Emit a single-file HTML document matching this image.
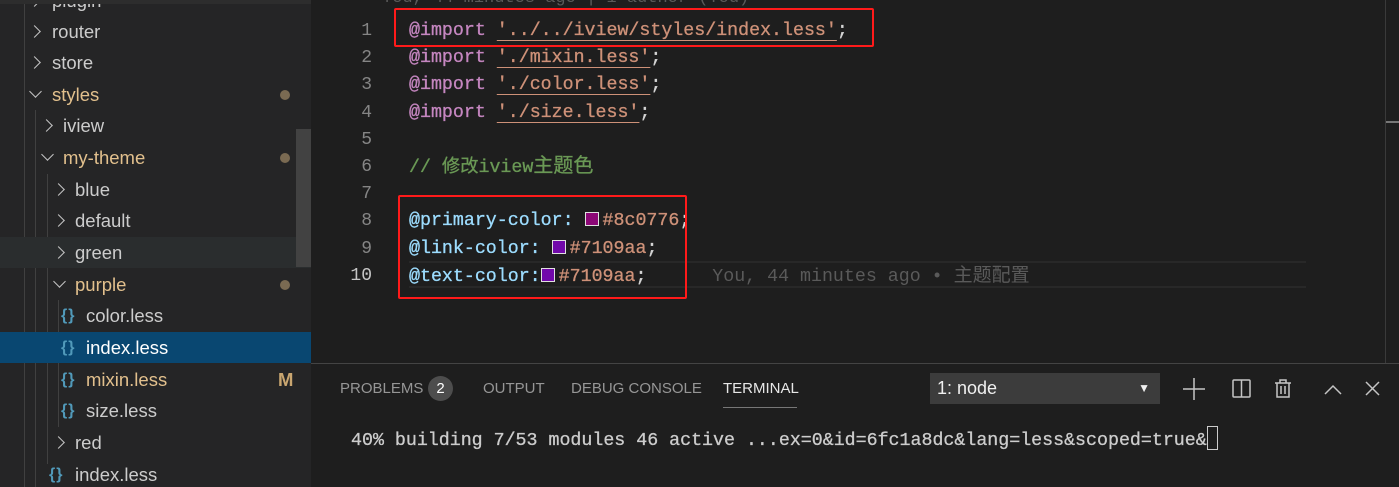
<!DOCTYPE html>
<html><head><meta charset="utf-8">
<style>
*{margin:0;padding:0;box-sizing:border-box}
body{width:1399px;height:487px;overflow:hidden;background:#1e1e1e;position:relative;font-family:"Liberation Sans","Noto Sans CJK SC",sans-serif}
#side{position:absolute;left:0;top:0;width:311px;height:487px;background:#252526;overflow:hidden}
.row{position:absolute;left:0;width:311px;height:31px;font-size:18.5px;color:#cccccc;line-height:31px;white-space:nowrap}
.row .t{position:absolute}
.chev{position:absolute;top:11px;width:9px;height:9px;border-right:1.5px solid #c5c5c5;border-bottom:1.5px solid #c5c5c5;transform:rotate(-45deg)}
.chev.o{transform:rotate(45deg);top:8px}
.dot{position:absolute;left:280px;top:11px;width:10px;height:10px;border-radius:50%;background:#7a6a52}
.br{position:absolute;color:#519aba;font-size:16px;font-weight:bold;letter-spacing:1px}
.mono{font-family:"Liberation Mono","Noto Sans CJK SC",monospace}
.guide{position:absolute;width:1px;background:#404040}
.ln{position:absolute;width:60px;left:312px;text-align:right;color:#858585;font-size:18px;line-height:27px}
.code{position:absolute;left:409px;font-size:18.3px;line-height:27px;white-space:pre;color:#d4d4d4;-webkit-text-stroke:0.3px}
.kw{color:#c586c0}.str{color:#ce9178;text-decoration:underline;text-decoration-color:#ce9178;text-underline-offset:5px}
.var{color:#9cdcfe}.cm{color:#6a9955}
.sw{display:inline-block;width:14px;height:14px;border:1.5px solid #e0e0e0;vertical-align:-1px;margin-right:4px;-webkit-text-stroke:0}
.red{position:absolute;border:2.5px solid #ff1a1a;border-radius:2px}
.tab{position:absolute;top:380px;font-size:15px;color:#969696}
</style></head><body>
<div id="side">
  <div class="guide" style="left:24px;top:0;height:487px"></div>
  <div class="guide" style="left:35px;top:110px;height:377px"></div>
  <div class="guide" style="left:47px;top:174px;height:290px"></div>
  <div class="row" style="top:-15px"><span class="chev" style="left:30px"></span><span class="t" style="left:52px">plugin</span></div>
  <div class="row" style="top:16px"><span class="chev" style="left:30px"></span><span class="t" style="left:52px">router</span></div>
  <div class="row" style="top:47px"><span class="chev" style="left:30px"></span><span class="t" style="left:52px">store</span></div>
  <div class="row" style="top:79px;color:#e2c08d"><span class="chev o" style="left:31px"></span><span class="t" style="left:52px">styles</span><span class="dot"></span></div>
  <div class="row" style="top:110px"><span class="chev" style="left:42px"></span><span class="t" style="left:63px">iview</span></div>
  <div class="row" style="top:142px;color:#e2c08d"><span class="chev o" style="left:43px"></span><span class="t" style="left:63px">my-theme</span><span class="dot"></span></div>
  <div class="row" style="top:174px"><span class="chev" style="left:54px"></span><span class="t" style="left:75px">blue</span></div>
  <div class="row" style="top:205px"><span class="chev" style="left:54px"></span><span class="t" style="left:75px">default</span></div>
  <div class="row" style="top:237px;background:#2a2d2e"><span class="chev" style="left:54px"></span><span class="t" style="left:75px">green</span></div>
  <div class="row" style="top:269px;color:#e2c08d"><span class="chev o" style="left:55px"></span><span class="t" style="left:75px">purple</span><span class="dot"></span></div>
  <div class="guide" style="left:58px;top:300px;height:127px"></div>
  <div class="row" style="top:300px"><span class="br" style="left:61px">{}</span><span class="t" style="left:86px">color.less</span></div>
  <div class="row" style="top:332px;background:#094771;color:#fff"><span class="br" style="left:61px">{}</span><span class="t" style="left:86px">index.less</span></div>
  <div class="row" style="top:364px;color:#e2c08d"><span class="br" style="left:61px">{}</span><span class="t" style="left:86px">mixin.less</span><span class="t" style="left:278px;font-weight:bold;color:#c9a670">M</span></div>
  <div class="row" style="top:395px"><span class="br" style="left:61px">{}</span><span class="t" style="left:86px">size.less</span></div>
  <div class="row" style="top:427px"><span class="chev" style="left:54px"></span><span class="t" style="left:75px">red</span></div>
  <div class="row" style="top:459px"><span class="br" style="left:49px">{}</span><span class="t" style="left:75px">index.less</span></div>
  <div style="position:absolute;left:296px;top:129px;width:15px;height:138px;background:#424242"></div>
  <div style="position:absolute;left:0;top:0;width:311px;height:4px;background:#2d2d2d"></div>
</div>

<div class="mono" style="position:absolute;left:382px;top:-11px;font-size:17px;color:#5a5a5a">You, 44 minutes ago | 1 author (You)</div>
<div class="mono">
<div class="ln" style="top:18px">1</div><div class="ln" style="top:45px">2</div><div class="ln" style="top:72px">3</div><div class="ln" style="top:100px">4</div><div class="ln" style="top:127px">5</div><div class="ln" style="top:154px">6</div><div class="ln" style="top:181px">7</div><div class="ln" style="top:208px">8</div><div class="ln" style="top:236px">9</div><div class="ln" style="top:263px;color:#c6c6c6">10</div>
</div>
<div style="position:absolute;left:409px;top:261px;width:897px;height:27px;border-top:2px solid #282828;border-bottom:2px solid #282828"></div>
<div class="code mono" style="top:18px"><span class="kw">@import</span> <span class="str">'../../iview/styles/index.less'</span>;</div>
<div class="code mono" style="top:45px"><span class="kw">@import</span> <span class="str">'./mixin.less'</span>;</div>
<div class="code mono" style="top:72px"><span class="kw">@import</span> <span class="str">'./color.less'</span>;</div>
<div class="code mono" style="top:100px"><span class="kw">@import</span> <span class="str">'./size.less'</span>;</div>
<div class="code mono" style="top:154px"><span class="cm">// 修改iview<span style="font-size:20px">主题色</span></span></div>
<div class="code mono" style="top:208px"><span class="var">@primary-color:</span> <span class="sw" style="background:#8c0776"></span><span style="color:#ce9178">#8c0776</span>;</div>
<div class="code mono" style="top:236px"><span class="var">@link-color:</span> <span class="sw" style="background:#7109aa"></span><span style="color:#ce9178">#7109aa</span>;</div>
<div class="code mono" style="top:263px"><span class="var">@text-color:</span><span class="sw" style="background:#7109aa"></span><span style="color:#ce9178">#7109aa</span>;      <span style="color:#5a5a5a;-webkit-text-stroke:0">You, 44 minutes ago • <span style="font-size:19px">主题配置</span></span></div>
<div class="red" style="left:394px;top:8px;width:480px;height:39px"></div>
<div class="red" style="left:398px;top:195px;width:289px;height:104px"></div>
<div style="position:absolute;left:1385px;top:0;width:1px;height:363px;background:#3a3a3a"></div>
<div style="position:absolute;left:1386px;top:121px;width:13px;height:2px;background:#777"></div>

<div style="position:absolute;left:311px;top:363px;width:1088px;height:124px;background:#1e1e1e;border-top:1px solid #444"></div>
<div class="tab" style="left:340px">PROBLEMS</div>
<div style="position:absolute;left:428px;top:376px;width:25px;height:25px;border-radius:50%;background:#4d4d4d;color:#fff;font-size:15px;text-align:center;line-height:25px">2</div>
<div class="tab" style="left:483px">OUTPUT</div>
<div class="tab" style="left:571px">DEBUG CONSOLE</div>
<div class="tab" style="left:723px;color:#e7e7e7">TERMINAL</div>
<div style="position:absolute;left:723px;top:407px;width:74px;height:1px;background:#777"></div>
<div style="position:absolute;left:930px;top:373px;width:230px;height:31px;background:#3c3c3c;color:#f0f0f0;font-size:18px;line-height:31px;padding-left:7px">1: node<span style="position:absolute;right:10px;top:0;font-size:12px">▼</span></div>
<svg style="position:absolute;left:1180px;top:374px" width="210" height="30" fill="none" stroke="#c5c5c5" stroke-width="1.5">
<path d="M14 4v22M3 15h22"/>
<rect x="53" y="6" width="17" height="17" rx="1"/><path d="M61.5 6v17"/>
<path d="M95 9h16M100 9V6h6v3M97 9v14h12V9M101 12v8M105 12v8"/>
<path d="M145 20l8-8 8 8"/>
<path d="M186 8l13 13M199 8l-13 13"/>
</svg>
<div class="mono" style="position:absolute;left:351px;top:426px;font-size:18.3px;color:#cccccc;white-space:pre;-webkit-text-stroke:0.3px">40% building 7/53 modules 46 active ...ex=0&amp;id=6fc1a8dc&amp;lang=less&amp;scoped=true&amp;<span style="display:inline-block;width:11px;height:24px;border:1px solid #ccc;vertical-align:-5px;-webkit-text-stroke:0"></span></div>
</body></html>
